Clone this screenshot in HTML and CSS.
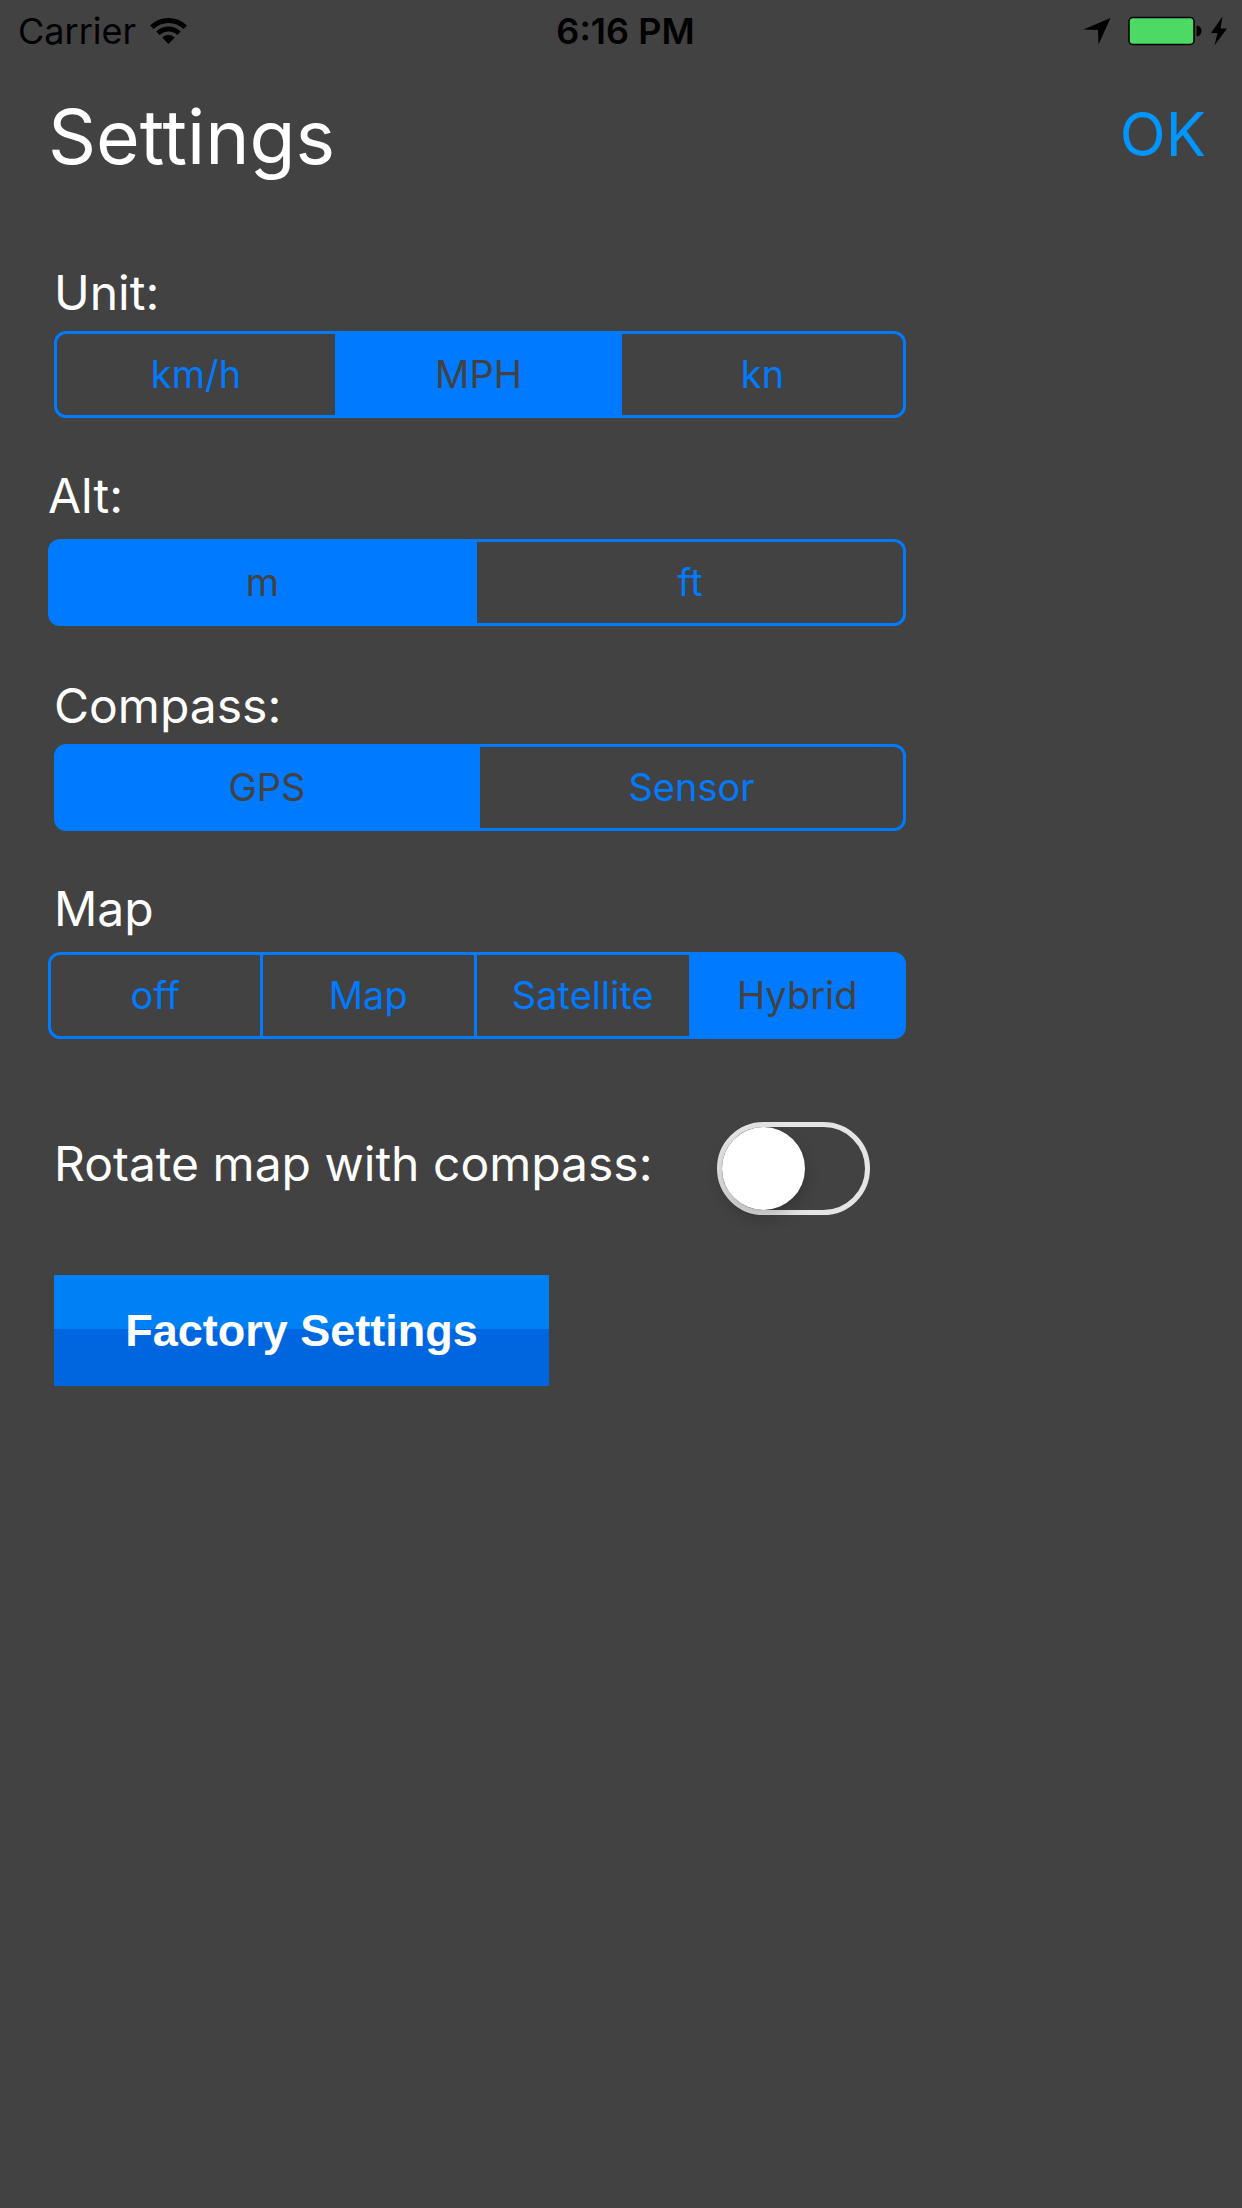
FILE: index.html
```
<!DOCTYPE html>
<html lang="en">

<head>
    <meta charset="UTF-8">
    <meta name="viewport" content="width=device-width, initial-scale=1.0">
    <title>Settings</title>
    <link rel="stylesheet" href="styles.css">
</head>

<body>

    <div class="status-bar">
        <div class="status-left">
            <span>Carrier</span>
            <svg class="wifi" width="37" height="28" viewBox="0 0 37 28">
                <g fill="none" stroke="#000" stroke-width="5">
                    <path d="M1.8 10.2 A24 24 0 0 1 35.2 10.2" />
                    <path d="M8 16.3 A15.2 15.2 0 0 1 29 16.3" />
                </g>
                <path d="M12.2 20.6 A9.2 9.2 0 0 1 24.8 20.6 L18.5 27 Z" />
            </svg>
        </div>
        <div class="status-time">6:16 PM</div>
        <div class="status-right">
            <svg width="28" height="28" viewBox="0 0 28 28">
                <path d="M27.5 1 L15.5 27.5 L15 13 L0.5 12.5 Z" />
            </svg>
            <svg class="battery" width="75" height="30" viewBox="0 0 75 30">
                <rect x="1" y="1.5" width="65" height="27" rx="4" fill="#4cd964" stroke="#000" stroke-width="1.5" />
                <path d="M69 10 A4 5 0 0 1 69 20 Z" stroke="#000" />
            </svg>
            <svg width="22" height="30" viewBox="0 0 22 30">
                <path d="M11.5 0.5 L0 17 L6.5 17 L3.5 29.5 L16 12.5 L9.5 12.5 Z" />
            </svg>
        </div>
    </div>

    <header class="header">
        <h1>Settings</h1>
        <button type="button" class="ok-btn">OK</button>
    </header>

    <main class="settings">
        <fieldset class="field">
            <legend>Unit:</legend>
            <div class="segments">
                <label><input type="radio" name="unit"><span>km/h</span></label>
                <label><input type="radio" name="unit" checked><span>MPH</span></label>
                <label><input type="radio" name="unit"><span>kn</span></label>
            </div>
        </fieldset>

        <fieldset class="field wide">
            <legend>Alt:</legend>
            <div class="segments">
                <label><input type="radio" name="alt" checked><span>m</span></label>
                <label><input type="radio" name="alt"><span>ft</span></label>
            </div>
        </fieldset>

        <fieldset class="field">
            <legend>Compass:</legend>
            <div class="segments">
                <label><input type="radio" name="compass" checked><span>GPS</span></label>
                <label><input type="radio" name="compass"><span>Sensor</span></label>
            </div>
        </fieldset>

        <fieldset class="field wide">
            <legend class="indent">Map</legend>
            <div class="segments">
                <label><input type="radio" name="map"><span>off</span></label>
                <label><input type="radio" name="map"><span>Map</span></label>
                <label><input type="radio" name="map"><span>Satellite</span></label>
                <label><input type="radio" name="map" checked><span>Hybrid</span></label>
            </div>
        </fieldset>

        <div class="switch-row">
            <label for="rotate">Rotate map with compass:</label>
            <input type="checkbox" class="switch" id="rotate">
        </div>

        <button type="button" class="factory-btn">Factory Settings</button>
    </main>

</body>

</html>
```
FILE: styles.css
```
* {
    box-sizing: border-box;
    margin: 0;
    padding: 0;
}

body {
    min-height: 100vh;
    background-color: #424242;
    color: #fff;
    font-family: Inter, sans-serif;
}

button {
    border: none;
    cursor: pointer;
}

/* Status bar */
.status-bar {
    display: grid;
    grid-template-columns: 1fr auto 1fr;
    align-items: center;
    height: 62px;
    padding: 0 9px 0 18px;
    color: #000;
    font-size: 36px;
}

.status-left,
.status-right {
    display: flex;
    align-items: center;
}

.status-left {
    gap: 14px;
}

.status-right {
    justify-content: flex-end;
}

.status-time {
    font-weight: 600;
}

.battery {
    margin: 0 8px 0 17px;
}

/* Title and OK */
.header {
    display: flex;
    align-items: flex-start;
    justify-content: space-between;
    padding: 29px 36px 0 48px;
}

h1 {
    font-size: 75px;
    font-weight: 400;
    line-height: 92px;
}

.ok-btn {
    background: none;
    color: #0096ff;
    font-family: Inter, sans-serif;
    font-size: 60px;
    font-weight: 400;
    line-height: 86px;
}

/* Form */
.settings {
    max-width: 960px;
    padding: 30px 54px 60px;
}

.field {
    border: none;
    min-width: 0;
    margin-top: 50px;
}

.field.wide {
    margin-top: 48px;
    margin-left: -6px;
}

legend,
.switch-row label {
    font-size: 48px;
    line-height: 60px;
}

legend {
    margin-bottom: 8px;
}

.wide legend {
    margin-bottom: 13px;
}

.indent {
    padding-left: 6px;
}

.segments {
    display: grid;
    grid-auto-flow: column;
    grid-auto-columns: 1fr;
    height: 87px;
}

.segments label {
    position: relative;
    display: flex;
    cursor: pointer;
}

.segments label + label {
    margin-left: -3px;
}

.segments input {
    position: absolute;
    opacity: 0;
}

.segments span {
    flex: 1;
    border: 3px solid #007aff;
    color: #007aff;
    font-size: 38px;
    line-height: 81px;
    text-align: center;
}

.segments label:first-child span {
    border-radius: 12px 0 0 12px;
}

.segments label:last-child span {
    border-radius: 0 12px 12px 0;
}

.segments input:checked + span {
    background-color: #007aff;
    color: #424242;
}

.switch-row {
    display: flex;
    align-items: center;
    justify-content: space-between;
    max-width: 816px;
    margin-top: 83px;
}

.switch-row label {
    padding-bottom: 10px;
}

.switch {
    appearance: none;
    width: 153px;
    height: 93px;
    border: 5px solid #e5e5e5;
    border-radius: 47px;
    cursor: pointer;
}

.switch::before {
    content: "";
    display: block;
    width: 83px;
    height: 83px;
    border-radius: 50%;
    background-color: #fff;
    box-shadow: 0 8px 16px rgba(0, 0, 0, 0.2);
}

.switch:checked {
    background-color: #4cd964;
    border-color: #4cd964;
}

.switch:checked::before {
    margin-left: auto;
}

.factory-btn {
    width: 495px;
    height: 111px;
    margin-top: 60px;
    background: linear-gradient(#0080f5 49%, #0066e0 49%);
    color: #fff;
    font-family: "Liberation Sans", Arial, sans-serif;
    font-size: 45px;
    font-weight: 700;
}
```
